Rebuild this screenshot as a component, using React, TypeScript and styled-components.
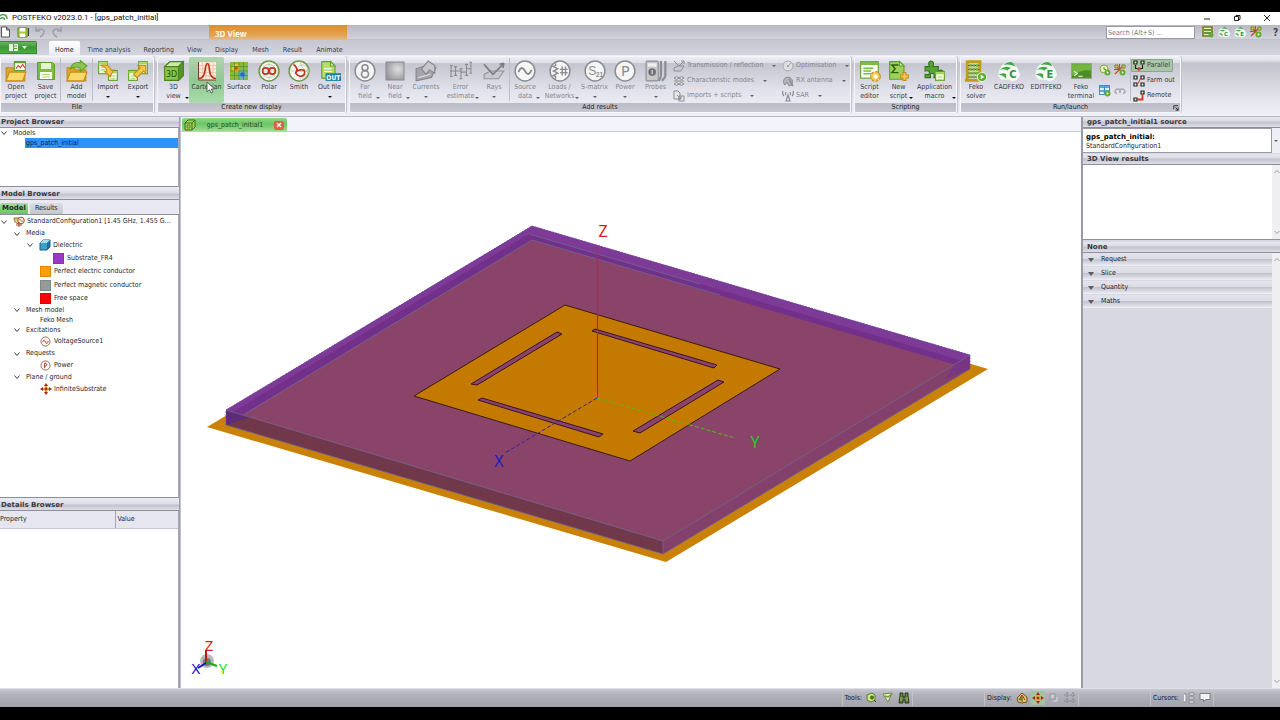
import React from "react";
import styled, { createGlobalStyle, css } from "styled-components";

const UI = `"DejaVu Sans Condensed", "DejaVu Sans", sans-serif`;
const BOLD = `"DejaVu Sans", sans-serif`;
const TITLE = `Roboto, "Noto Sans", sans-serif`;

const Global = createGlobalStyle`
  * { box-sizing: border-box; }
  body { margin: 0; background: #000; font-family: ${UI}; font-size: 7px; line-height: 9px; color: #26262c; }
  button, input { font: inherit; color: inherit; }
  button { margin: 0; padding: 0; border: 0; background: none; white-space: nowrap; }
  ul { list-style: none; margin: 0; padding: 0; }
  svg { display: block; flex: none; }
`;

const Screen = styled.div`
  min-height: 100vh;
  padding: 12px 0 13px;
  display: flex;
  flex-direction: column;
  background: #000;
  overflow: hidden;
`;

/* ---------- window chrome ---------- */
const TitleBar = styled.header`
  height: 13px;
  padding-bottom: 2px;
  display: flex;
  align-items: center;
  background: #fff;
  color: #111;
  gap: 3px;
`;
const TitleText = styled.h1`
  margin: 0;
  flex: 1;
  font-family: ${TITLE};
  font-size: 8px;
  line-height: 11px;
  font-weight: 400;
  white-space: nowrap;
`;
const WindowButtons = styled.div`
  display: flex;
  gap: 18px;
  padding-right: 7px;
`;
const IconButton = styled.button<{ $on?: boolean; $w?: number }>`
  width: ${(p) => p.$w ?? 12}px;
  display: flex;
  justify-content: center;
  align-items: center;
  ${(p) => p.$on && css`background: #a3c4a0; box-shadow: 0 0 0 1px #a3c4a0;`}
`;
const QuickBar = styled.div`
  height: 15px;
  display: flex;
  align-items: stretch;
  background: linear-gradient(#b9b9c4, #d2d2dc);
  border-bottom: 1px solid #c0c0ca;
`;
const QuickTools = styled.div`
  width: 209px;
  display: flex;
  align-items: center;
  gap: 4px;
  flex: none;
`;
const QuickMark = styled.span`
  width: 1px;
  height: 8px;
  margin-left: -4px;
  background: #333;
`;
const ContextTitle = styled.div`
  width: 138px;
  height: 17px;
  padding: 4px 0 0 6px;
  background: linear-gradient(#d98e33, #e3a251 60%, #e6b983 85%, #d8cbc4);
  font-family: "Noto Sans", sans-serif;
  font-size: 8px;
  font-weight: 700;
  color: #fff8ec;
`;
const QuickRight = styled.div`
  margin-left: auto;
  display: flex;
  align-items: center;
  gap: 4px;
`;
const Search = styled.input`
  width: 89px;
  height: 13px;
  margin: 1px 3px 0 0;
  padding: 0 1px;
  border: 1px solid #9a9aa6;
  background: #fff;
  &::placeholder { color: #77777f; opacity: 1; }
`;
const Help = styled.button`
  width: 9px;
  font-size: 10px;
  font-weight: 700;
  color: #444;
  margin-left: 5px;
  overflow: visible;
`;

/* ---------- ribbon ---------- */
const TabStrip = styled.nav`
  height: 15px;
  display: flex;
  align-items: flex-end;
  gap: 1px;
  background: linear-gradient(#c6c6d1, #d4d4de);
`;
const AppButton = styled.button`
  width: 37px;
  height: 13px;
  margin: 0 11px 1px 0;
  display: flex;
  align-items: center;
  justify-content: center;
  gap: 4px;
  border: 1px solid #3c8a30;
  border-left: 0;
  border-radius: 0 2px 0 0;
  background: linear-gradient(#6bb35f, #3a9a35 50%, #4fa944);
`;
const RibbonTab = styled.button<{ $active?: boolean }>`
  height: 14px;
  padding: 4px 6px 0;
  color: #3c3c46;
  border-radius: 2px 2px 0 0;
  ${(p) => p.$active && css`background: linear-gradient(#fff, #ececf4); margin-right: 1px; color: #222;`}
  &:nth-of-type(n + 7) { padding-left: 7px; }
`;
const RibbonBar = styled.div`
  height: 62px;
  padding: 1px 0 3px;
  display: flex;
  gap: 3px;
  background: linear-gradient(#ededf5, #e4e4ee 8%, #c3c3cd 14%, #e6e6ef 75%, #f0f0f8);
  border-bottom: 1px solid #b9b9c6;
`;
const Group = styled.section`
  flex: none;
  display: flex;
  flex-direction: column;
  border: 1px solid #f6f6fb;
  border-radius: 2px;
  box-shadow: 1px 0 0 #c3c3ce;
  background: linear-gradient(#ededf4, #dfdfe8 10%, #c5c5cf 12%, #e2e2ec 60%, #f0f0f8);
  overflow: hidden;
`;
const GroupBody = styled.div`
  height: 47px;
  display: flex;
`;
const GroupTitle = styled.div`
  height: 9px;
  display: flex;
  align-items: center;
  justify-content: center;
  background: linear-gradient(#bcbcc6, #c8c8d2);
  color: #1c1c22;
  position: relative;
`;
const Launcher = styled.button`
  position: absolute;
  right: 1px;
  top: 1px;
`;
const Divider = styled.span`
  width: 1px;
  margin: 1px 0 2px;
  background: #bdbdc9;
`;
const Tool = styled.button<{ $w: number; $hot?: boolean; $off?: boolean }>`
  width: ${(p) => p.$w}px;
  padding-top: 3px;
  display: flex;
  flex-direction: column;
  align-items: center;
  color: ${(p) => (p.$off ? "#85858e" : "#3a3a42")};
  position: relative;
  ${(p) => p.$hot && css`background: linear-gradient(#b3d3b0, #8fc891 50%, #a9dcab); border-radius: 2px;`}
`;
const ToolIcon = styled.span`
  height: 22px;
  display: flex;
  align-items: center;
`;
const ToolText = styled.span`
  margin-top: 1px;
  display: block;
  text-align: center;
  white-space: pre;
`;
const Caret = styled.span<{ $corner?: boolean; $off?: boolean }>`
  width: 0;
  height: 0;
  border: 2px solid transparent;
  border-bottom: 0;
  border-top-color: ${(p) => (p.$off ? "#5f5f68" : "#111")};
  ${(p) => (p.$corner ? css`position: absolute; right: 0; bottom: 4px;` : css`margin-top: 4px;`)}
`;
const SmallColumn = styled.div<{ $w: number }>`
  width: ${(p) => p.$w}px;
  padding-top: 2px;
  display: flex;
  flex-direction: column;
  align-items: flex-start;
  gap: 2px;
`;
const SmallTool = styled.button<{ $off?: boolean; $on?: boolean }>`
  height: 13px;
  padding: 0 2px 0 1px;
  display: flex;
  align-items: center;
  gap: 2px;
  color: ${(p) => (p.$off ? "#85858e" : "#3a3a42")};
  border: 1px solid transparent;
  ${(p) => p.$on && css`background: #a9c6a8; border-color: #8aa689; border-radius: 1px;`}
  ${Caret} { margin: 0 0 0 7px; }
`;
const IconGrid = styled.div`
  width: 33px;
  padding: 7px 1px 6px 2px;
  display: grid;
  grid-template-columns: 15px 15px;
  align-content: space-between;
`;
const Pointer = styled.svg`
  position: absolute;
  left: 17px;
  top: 24px;
  z-index: 2;
`;

/* ---------- panels ---------- */
const Body = styled.main`
  flex: 1;
  display: grid;
  grid-template-columns: 180px minmax(0, 1fr) 199px;
`;
const LeftDock = styled.aside`
  display: flex;
  flex-direction: column;
  border-right: 1px solid #9f9fac;
  background: #e9e9f3;
`;
const RightDock = styled.aside`
  display: flex;
  flex-direction: column;
  border-left: 2px solid #9a9aa8;
  background: #d8d8e2;
`;
const PanelTitle = styled.h2<{ $inset?: boolean }>`
  height: 11px;
  margin: 0;
  padding-left: ${(p) => (p.$inset ? 4 : 1)}px;
  font-size: 7px;
  line-height: 11px;
  font-family: ${BOLD};
  font-weight: 700;
  color: #3a3a42;
  background: linear-gradient(#e6e6ef, #dcdce6 40%, #c2c2cd 50%, #dedee8);
  border-bottom: 1px solid #8f8f9c;
`;
const Pane = styled.div<{ $h?: number }>`
  ${(p) => (p.$h ? css`height: ${p.$h}px; margin-bottom: 2px; border-bottom: 1px solid #8f8f9c;` : css`flex: 1;`)}
  background: #fff;
  border-right: 1px solid #a9a9b5;
  overflow: hidden;
`;
const TreeRow = styled.li<{ $depth: number; $h?: number }>`
  height: ${(p) => p.$h ?? 12}px;
  padding-left: ${(p) => p.$depth}px;
  display: flex;
  align-items: center;
  white-space: nowrap;
`;
const Twist = styled.span`
  width: 12px;
  display: flex;
`;
const TreeIcon = styled.span`
  width: 14px;
  display: flex;
`;
const Swatch = styled.span<{ $c: string }>`
  width: 11px;
  height: 11px;
  background: ${(p) => p.$c};
  box-shadow: inset 0 0 0 1px rgba(0, 0, 0, 0.12);
`;
const Selected = styled.span`
  flex: 1;
  height: 10px;
  line-height: 10px;
  padding-left: 1px;
  background: #2e92fb;
  color: #10203c;
`;
const PanelTabs = styled.div`
  height: 15px;
  padding-top: 3px;
  display: flex;
  gap: 2px;
  border-bottom: 1px solid #8f8f9c;
`;
const PanelTab = styled.button<{ $active?: boolean }>`
  padding: 0 ${(p) => (p.$active ? 2 : 5)}px;
  background: ${(p) => (p.$active ? "linear-gradient(#a5dc9c, #6cc264)" : "linear-gradient(#dcdce4, #c6c6d0)")};
  font-family: ${(p) => (p.$active ? BOLD : UI)};
  font-weight: ${(p) => (p.$active ? 700 : 400)};
  border-radius: 2px 2px 0 0;
`;
const Details = styled.table`
  width: 100%;
  border-collapse: collapse;
  th {
    height: 17px;
    padding: 1px 0 0 2px;
    font-weight: 400;
    text-align: left;
    background: #e6e6f0;
    border-bottom: 1px solid #c6c6d0;
  }
  th:first-child { width: 115px; padding-left: 0; border-right: 1px solid #a5a5b0; }
`;
const Center = styled.section`
  display: flex;
  flex-direction: column;
  background: #fff;
  border-left: 1px solid #c3c3cf;
`;
const DocTabs = styled.div`
  height: 15px;
  padding: 1px 1px 0;
  background: #f3f3fc;
  border-bottom: 1px solid #c9c9d6;
`;
const DocTab = styled.div`
  width: 105px;
  height: 13px;
  padding: 1px 3px 0 2px;
  display: flex;
  align-items: center;
  justify-content: space-between;
  background: linear-gradient(#8fd886, #6cc565 45%, #98dd8f);
  border-radius: 2px 2px 0 0;
  color: #2b4a2b;
`;
const Close = styled.button`
  width: 10px;
  height: 9px;
  display: flex;
  align-items: center;
  justify-content: center;
  background: #e2603f;
  border-radius: 2px;
`;
const Viewport = styled.div`
  flex: 1;
  display: flex;
`;
const Scene = styled.svg`
  width: 100%;
  flex: 1;
`;
const SourceRow = styled.div`
  height: 25px;
  margin-bottom: 1px;
  display: flex;
`;
const Source = styled.button`
  flex: 1;
  padding: 2px 0 0 3px;
  text-align: left;
  background: #fff;
  border: 1px solid #9c9ca8;
  border-left: 0;
  b { display: block; font-family: ${BOLD}; color: #000; }
`;
const SourceArrow = styled.span`
  width: 8px;
  display: flex;
  align-items: center;
  justify-content: center;
  background: #eeeef7;
  ${Caret} { margin: 0; }
`;
const ScrollArea = styled.div<{ $h?: number }>`
  display: flex;
  ${(p) => (p.$h ? css`height: ${p.$h}px; background: #fff; border-bottom: 1px solid #8f8f9c; margin-bottom: 2px;` : css`flex: 1;`)}
`;
const ScrollContent = styled.div`
  flex: 1;
`;
const ScrollBar = styled.div`
  width: 8px;
  padding: 4px 0;
  display: flex;
  flex-direction: column;
  justify-content: space-between;
  align-items: flex-end;
  background: #efeff1;
`;
const Fold = styled.button`
  width: 100%;
  height: 13px;
  margin-bottom: 1px;
  padding-left: 5px;
  display: flex;
  align-items: center;
  gap: 7px;
  background: linear-gradient(#e3e3ed, #dcdce6 45%, #c3c3ce 50%, #e0e0ea 85%, #f0f0f6);
`;

/* ---------- status bar ---------- */
const StatusBar = styled.footer`
  height: 19px;
  padding-right: 66px;
  display: flex;
  justify-content: flex-end;
  align-items: center;
  gap: 71px;
  background: linear-gradient(#c8c8d2, #b2b2bc 30%, #a2a2ac);
  border-top: 1px solid #dedee6;
`;
const StatusGroup = styled.div`
  height: 16px;
  padding: 0 2px;
  display: flex;
  align-items: center;
  gap: 4px;
  border: 1px solid #c1c1ca;
  border-width: 0 1px;
  color: #18181c;
`;

/* ---------- icon drawings ---------- */
const G = "#5fa02c";
const L = "#a9d65a";
const Y = "#f3c548";
const YD = "#c58d14";
const N = "#8c8c94";
const svg = (s: number, children: React.ReactNode, box = 20) => (
  <svg width={s} height={s} viewBox={`0 0 ${box} ${box}`} fill="none" aria-hidden="true">{children}</svg>
);
const folder = (
  <>
    <path d="M1 7h6l2 2h9v10H1z" fill="#d9a52c" stroke={YD} />
    <path d="M4 11h15l-3 8H1z" fill="#f8d868" stroke={YD} />
  </>
);
const sheet = (x: number, y: number, w = 10, h = 10) => (
  <>
    <rect x={x} y={y} width={w} height={h} fill="#f2f8e2" stroke={G} />
    <path d={`M${x} ${y + 1.5}h${w}`} stroke={L} strokeWidth="2" />
    <path d={`M${x + 2} ${y + 5}h${w - 4}M${x + 2} ${y + 7.5}h${w - 4}`} stroke={L} />
  </>
);
const disc = (c: string) => <circle cx="10" cy="10" r="9" fill="#f6f6f4" stroke={c} strokeWidth="1.4" />;
const play = <><circle cx="15.5" cy="15.5" r="4.2" fill="#5fae2e" stroke="#e9f6d8" /><path d="M14.3 13.4v4.2l3.2-2.1z" fill="#fff" /></>;
const shell = (letter: string, s: number) =>
  svg(s, <>
    <path d="M0 14Q1 6 6 3q4-3 8 0 5 4 6 11l-3 4H3z" fill="#f1f8f0" />
    <path d="M5 4.500Q10 0 14 3l2 3Q10 3 5 4.500z" fill="#43a64a" />
    <path d="M1.500 9Q7 4 13 8l-3 2.500Q6 7.500 1.500 9z" fill="#43a64a" />
    <path d="M.5 13.500q4-2.500 7-.5v4Q4 13.500.500 13.500z" fill="#43a64a" />
    <circle cx="13.500" cy="13" r="6" fill="#f5faf3" />
    <text x="13.500" y="16.200" fontSize="9" fontWeight="700" fontFamily="DejaVu Sans" textAnchor="middle" fill="#2f9440">{letter}</text>
  </>);

const ico = {
  open: svg(22, <>{folder}<rect x="8.500" y="1.500" width="10" height="8" fill="#fff" stroke={G} /><path d="M8.500 2h10" stroke={G} strokeWidth="2" /><path d="M10 8l2-3 2 2 2-3 2 3" stroke="#c03a28" /></>),
  save: svg(20, <><path d="M1.500 1.500h15l2 2v15h-17z" fill="#7dbb42" stroke={G} /><rect x="5" y="2" width="10" height="6" fill="#e5f3cf" /><rect x="4" y="11" width="12" height="7" fill="#fff" /><path d="M6 13.500h8M6 16h8" stroke={L} /></>),
  add: svg(22, <>{folder}<path d="M4 8Q6 1 13 2.500V.5l6 5-6 5V7.500Q9 5 4 8z" fill="#8dc450" stroke={G} /></>),
  imp: svg(22, <>{sheet(1.5, 1.500, 8, 11)}{sheet(10.5, 9.500, 8, 9)}<path d="M3 5q5 0 6 5l-2 .5 5 4.500 3-6-2 .5Q11 3 3 5z" fill={Y} stroke={YD} /></>),
  exp: svg(22, <>{sheet(10.5, 1.500, 8, 11)}{sheet(1.5, 9.500, 8, 9)}<path d="M6 13l6-6-2-2h7v7l-2-2-6 6z" fill={Y} stroke={YD} /></>),
  cube: svg(22, <><path d="M1.500 6l5-4.500h12V14L14 18.500H1.500z" fill="#8cc44c" stroke="#4a8420" /><path d="M1.500 6l5-4.500h12L14 6z" fill="#cdeaa2" stroke="#4a8420" /><path d="M14 6l4.500-4.500V14L14 18.500z" fill="#559628" stroke="#4a8420" /><text x="7.800" y="15" fontSize="8" fontFamily="DejaVu Sans Condensed" textAnchor="middle" fill="#24500c">3D</text></>),
  cart: svg(20, <><rect x="1" y="1" width="18" height="18" fill="#f7efdc" /><path d="M1 4.500h18M1 8h18M1 11.500h18M1 15h18M5.500 1v18M9 1v18M12.500 1v18M16 1v18" stroke="#e5b79a" strokeWidth=".7" /><path d="M1.500 1v18H19" stroke="#7a3d28" /><path d="M2 17.500q5 0 6-8 1-7 2.500-7t2 7q1 8 6.500 8" stroke="#c22a1c" strokeWidth="1.700" /></>),
  surface: svg(20, <><rect x="1" y="1" width="18" height="18" fill="#86bd35" /><circle cx="7" cy="7" r="4" fill="#f2bf3a" /><circle cx="7" cy="7" r="2" fill="#dc4a22" /><circle cx="13.500" cy="13.500" r="4.500" fill="#58b8c9" /><circle cx="13.500" cy="13.500" r="2.300" fill="#2f62b8" /><path d="M5.500 1v18M10 1v18M14.500 1v18M1 5.500h18M1 10h18M1 14.500h18" stroke="#4f8020" strokeWidth=".6" /></>),
  polar: svg(22, <>{disc("#6d9646")}<circle cx="10" cy="10" r="6" stroke="#b9c8a0" strokeWidth=".8" /><path d="M10 1v18M1 10h18M4 4l12 12M16 4L4 16" stroke="#b9c8a0" strokeWidth=".6" /><circle cx="7" cy="10" r="2.800" stroke="#c0321e" strokeWidth="1.500" /><circle cx="13" cy="10" r="2.800" stroke="#c0321e" strokeWidth="1.500" /></>),
  smith: svg(22, <>{disc("#6d9646")}<circle cx="13" cy="10" r="5.500" stroke="#b9c8a0" strokeWidth=".8" /><path d="M1 10h18M19 10Q12 9 11 1M19 10q-7 1-8 9" stroke="#b9c8a0" strokeWidth=".7" /><path d="M5 4q5 4 2 8 4 5 8 1 1-5-4-4-4 1-4 3" stroke="#c0321e" strokeWidth="1.500" /></>),
  out: svg(22, <><path d="M2.500 1.500h8l4 4v11h-12z" fill="#b6db70" stroke={G} /><path d="M10.500 1.500v4h4z" fill="#eef8d8" stroke={G} /><path d="M4.500 8h7M4.500 10.500h7" stroke="#fff" /><rect x="6" y="12" width="14" height="7" fill="#1d7fa0" /><text x="13" y="17.800" fontSize="6" fontWeight="700" fontFamily="DejaVu Sans Condensed" textAnchor="middle" fill="#fff">OUT</text></>),
  far: svg(22, <>{disc(N)}<circle cx="10" cy="7" r="2.700" stroke={N} strokeWidth="1.500" /><circle cx="10" cy="12.800" r="3.200" stroke={N} strokeWidth="1.500" /></>),
  near: svg(20, <><defs><radialGradient id="nf" cx=".65" cy=".4" r=".8"><stop offset="0" stopColor="#dededf" /><stop offset="1" stopColor="#8e8e94" /></radialGradient></defs><rect x="1" y="1" width="18" height="18" fill="url(#nf)" stroke="#8a8a90" /></>),
  cur: svg(22, <><path d="M1 8l10-3 8 2-4 9-14 3z" fill="#a4a4aa" stroke="#85858c" /><path d="M6 8l6-7 6 4v7l-5-3-3 4z" fill="#c6c6cb" stroke="#85858c" /><path d="M3 16l11-3" stroke="#ddd" /></>),
  err: svg(22, <path d="M1 5v10M0 10h5M5 6v8M5 10h5M10 8v9M10 11h5M15 4v10M15 8h4M19 2v10M8.500 8h3M8.500 17h3M-.5 5h3M-.5 15h3M3.500 6h3M3.500 14h3M13.500 4h3M13.500 14h3M17.500 2h3M17.500 12h3" stroke={N} />),
  rays: svg(22, <><path d="M1 13l6-3h12l-5 7H1z" fill="#c8c8cd" stroke="#94949b" /><path d="M1 4l8 9L19 3M19 3l-1 4M19 3l-4 1" stroke="#7d7d85" strokeWidth="1.500" /></>),
  src: svg(22, <>{disc(N)}<path d="M4 11q3-7 6-1t6-1" stroke={N} strokeWidth="1.700" /></>),
  loads: svg(22, <>{disc(N)}<path d="M6 3v2l-2 1 4 2-4 2 4 2-4 2 2 1v2" stroke={N} strokeWidth="1.300" /><path d="M12 6v8M15 6v8M10 8.500h7M10 11.500h7" stroke={N} strokeWidth="1.300" /></>),
  smat: svg(22, <>{disc(N)}<text x="7.500" y="14" fontSize="11" fontFamily="Liberation Sans" textAnchor="middle" fill={N}>S</text><text x="14" y="15.500" fontSize="6" fontWeight="700" fontFamily="Liberation Sans" textAnchor="middle" fill={N}>21</text></>),
  pow: svg(22, <>{disc(N)}<text x="10.300" y="14.500" fontSize="13" fontFamily="DejaVu Sans" textAnchor="middle" fill={N}>P</text></>),
  probe: svg(22, <><rect x="1" y="1" width="11" height="18" rx="1" fill="#c9c9cd" stroke={N} /><rect x="2.500" y="3" width="8" height="3" fill="#efefef" /><circle cx="6.500" cy="11" r="3.500" fill="#707078" /><path d="M6.500 9v4" stroke="#eee" /><path d="M14.500 1v14M18.500 1v14M14.500 15l-2 4M18.500 15l-3 4" stroke={N} strokeWidth="2" /></>),
  script: svg(22, <><rect x="1.500" y="1.500" width="16" height="15" fill="#fbfdf4" stroke={G} /><path d="M1.500 3h16" stroke="#7dbb42" strokeWidth="3" /><path d="M4 7.500h9M4 10h7M4 12.500h8" stroke="#7dbb42" strokeWidth="1.200" /><circle cx="15" cy="15" r="3.200" stroke={YD} strokeWidth="3.400" strokeDasharray="2 .9" /><circle cx="15" cy="15" r="3" fill="#fff" stroke={Y} strokeWidth="2" /></>),
  news: svg(22, <><path d="M1.500 1.500h9l4 4v12h-13z" fill="#9fd05a" stroke={G} /><path d="M10.500 1.500v4h4z" fill="#e8f5cf" stroke={G} /><path d="M9.500 4.500h-6l3 3.500-3 3.500h6" stroke="#2d5d10" strokeWidth="1.300" /><path d="M15 11v8M11 15h8" stroke={YD} strokeWidth="3.600" /><path d="M15 12v6M12 15h6" stroke={Y} strokeWidth="2" /></>),
  macro: svg(22, <><path d="M1 6h4q-2-4 1-5 4 0 2 5h5v4q4-2 4.500 1t-4.500 2v3H9q1-4-1.500-4T6 16H1v-3q4 1 4-1.500T1 10z" fill="#58a336" stroke="#2f7420" />{sheet(10.5, 10.500, 8, 8)}</>),
  solver: svg(22, <><path d="M2 1v18M13.500 1v18M0 18.500h16M1 1.500h14" stroke="#c29a1c" strokeWidth="2.600" /><path d="M3 5h10M3 8.500h10M3 12h10M3 15.500h10" stroke="#3c3416" strokeWidth=".8" /><path d="M4 5h8M4 8.500h8M4 12h8M4 15.500h8" stroke="#7ab52e" strokeWidth="2.400" strokeDasharray="2 1" />{play}</>),
  term: svg(21, <><rect x="0.500" y="2.500" width="19" height="14" fill="#4a8f22" stroke="#98a08e" /><path d="M1 3h18v6Q10 8 1 14z" fill="#75b643" /><path d="M3 10l3 2-3 2M7 14.500h4" stroke="#fff" /></>),
};

const small = {
  tr: svg(12, <path d="M1 1l5 5 5-5M8 1h3v3M1 8l4-2h6l-3 5H1z" stroke={N} />, 12),
  cm: svg(12, <path d="M1 3q2.500-3 5 0t5 0M1 3q2.500 3 5 0t5 0M1 9q2.500-3 5 0t5 0M1 9q2.500 3 5 0t5 0M1 6h10" stroke={N} />, 12),
  im: svg(12, <><path d="M1 1h4l2 2v6H1zM6 6h5v5H6z" fill="#e8e8ec" stroke={N} /><path d="M4 5l4 4M8 6v3H5" stroke={N} /></>, 12),
  op: svg(12, <><circle cx="6" cy="6" r="5" fill="#dfdfe3" stroke="#a6a6ad" /><circle cx="6" cy="6" r="1" fill={N} /><path d="M6 6l3-3" stroke="#a6a6ad" /></>, 12),
  rx: svg(12, <><path d="M2 9q-2-6 4-7 6 1 4 8l-3 1-2-4-2 3z" fill="#b4b4ba" stroke={N} /><path d="M7 4l4 7" stroke={N} strokeWidth="1.500" /></>, 12),
  sar: svg(12, <path d="M6 5l-2 6h4zM1 1q-1 3 1 5M11 1q1 3-1 5M4 2q-1 2 0 3M8 2q1 2 0 3" stroke={N} strokeWidth="1.200" />, 12),
  par: svg(12, <><path d="M1 1h3v3H1zM8 1h3v3H8z" fill="#d9ef9a" stroke="#222" strokeWidth="1.200" /><path d="M2.500 5v3.500H9.500V5" stroke="#222" strokeWidth="1.200" /><circle cx="6" cy="9" r="1.700" fill="#d43a22" /></>, 12),
  farm: svg(12, <><path d="M1 1h3v3H1zM8 1h3v3H8zM1 8h3v3H1zM8 8h3v3H8z" fill="#f2f2e6" stroke="#222" strokeWidth="1.200" /><path d="M4 10L8 3" stroke="#d43a22" /></>, 12),
  rem: svg(12, <><path d="M8 1h3v3H8zM1 8h3v3H1z" fill="#d9ef9a" stroke="#222" strokeWidth="1.200" /><path d="M4 9.500h5.500V4" stroke="#d43a22" strokeWidth="1.800" /></>, 12),
  time: svg(12, <><circle cx="5" cy="5" r="4" fill="#e6f2c0" stroke="#8aa63a" /><path d="M5 3v2.500h2" stroke="#6d8730" /><circle cx="8.500" cy="8.500" r="3" fill="#62ac30" /><path d="M7.800 7v3l2-1.500z" fill="#fff" /></>, 12),
  opt: svg(12, <><path d="M1 1l9 9M10 1L1 10M5.500 0v6M0 5.500h6" stroke="#c8452c" strokeWidth="1.200" /><path d="M1 1h3v3H1zM8 1h3v3H8z" fill="#b9cf4a" stroke="#7a8a20" /><circle cx="8.500" cy="8.500" r="3" fill="#62ac30" /><path d="M7.800 7v3l2-1.500z" fill="#fff" /></>, 12),
  win: svg(12, <><rect x=".5" y=".5" width="10" height="9" fill="#dff1fb" stroke="#3e8fc4" /><path d="M1 2h9M5.500 1v8M1 6h9" stroke="#3e8fc4" strokeWidth="1.300" /><circle cx="8.500" cy="8.500" r="3" fill="#62ac30" /><path d="M7.800 7v3l2-1.500z" fill="#fff" /></>, 12),
  link: svg(12, <path d="M1 8q0-4 3-4t2 4M11 8q0-4-3-4t-2 4M1 8h2M9 8h2" stroke="#a9a9b1" strokeWidth="1.500" />, 12),
  newdoc: svg(12, <path d="M1.500 1h5l3 3v7h-8zM6.500 1v3h3" fill="#fff" stroke="#555" />, 12),
  save: svg(11, <><path d="M1 1h10v10H1z" fill="#a8c83c" stroke="#5c8a1c" /><path d="M3 1h6v4H3zM3 7h6v4H3z" fill="#fff" /></>, 12),
  undo: svg(12, <path d="M2 1v4h4M2 5q5-4 8 0 0 4-4 6" stroke="#a0a0aa" strokeWidth="1.600" />, 12),
  redo: svg(12, <path d="M10 1v4H6M10 5Q5 1 2 5q0 4 4 6" stroke="#a0a0aa" strokeWidth="1.600" />, 12),
  abacus: svg(12, <><path d="M1 1h9v9H1z" fill="#e5f0b8" stroke="#7a7a1a" strokeWidth="1.600" /><path d="M2 4h7M2 7h7" stroke="#3f7018" strokeWidth="1.600" /><circle cx="9" cy="9" r="2.500" fill="#62ac30" /></>, 12),
  cube: svg(12, <><path d="M1 4l3-3h7v7l-3 3H1z" fill="#a4d45c" stroke="#3c6e18" /><path d="M8 4v7M1 4h7l3-3" stroke="#3c6e18" /><path d="M3 6h3v3H3z" stroke="#3c6e18" strokeWidth=".7" /></>, 12),
  zoom: svg(12, <><path d="M1 3l5-2 3 2v5L5 10 1 8z" fill="#cfe38a" stroke="#5c7a1c" /><circle cx="6" cy="5.500" r="2" fill="#3f7a18" /><path d="M8 8l2 2" stroke="#333" /></>, 12),
  pick: svg(12, <><path d="M1 2l9-1-4 9z" fill="#e8edcc" stroke="#7a8446" /><path d="M3 4l3 1 4-3" stroke="#6ba32e" strokeWidth="1.500" /></>, 12),
  find: svg(12, <><path d="M2 1h3v4h2V1h3v3l1 7H7V8H5v3H1l1-7z" fill="#5f7d3c" stroke="#2c3a1c" /><path d="M3 5v4M9 5v4" stroke="#a9bf80" /></>, 12),
  view: svg(12, <><path d="M1 6l5-5 5 4v5l-5 1-4-1z" fill="#e0c070" stroke="#6e5a1e" /><path d="M3 8l3-5 3 5M6 4v6" stroke="#a03a24" /><circle cx="5" cy="7" r="1.500" fill="#4f8f2a" /></>, 12),
  axes: svg(12, <><path d="M6 0L4 3h4zM6 12L4 9h4zM0 6l3-2v4zM12 6L9 4v4z" fill="#a8281c" /><path d="M6 3v6M3 6h6" stroke="#d8a030" strokeWidth="2.400" /><circle cx="6" cy="6" r="1.300" fill="#a8281c" /></>, 12),
  dim: svg(12, <><rect x="2" y="2" width="5" height="5" fill="#ccccd3" stroke="#93939c" /><path d="M5 9h4V5" stroke="#dadae0" /></>, 12),
  crop: svg(12, <path d="M3 0v12M9 0v12M0 3h12M0 9h12" stroke="#85858e" strokeDasharray="2 1" />, 12),
  legend: svg(12, <><path d="M1 2h2v8H1M6 1h5v2H6zM6 5h5v2H6zM6 9h5v2H6z" fill="#f4f4f6" stroke="#7e7e88" strokeWidth=".8" /></>, 12),
  note: svg(12, <path d="M1 1.500h10v6H6.500L4.500 10V7.500H1z" fill="#f4f4f6" stroke="#7d7d86" />, 12),
};

const chevron = (s = 6) => (
  <svg width={s} height={s} viewBox="0 0 6 6" fill="none" aria-hidden="true"><path d="M.5 1.500L3 4.500l2.500-3" stroke="#444" /></svg>
);
const scrollMark = (up: boolean) => (
  <svg width="6" height="6" viewBox="0 0 6 6" fill="none" aria-hidden="true"><path d={up ? "M.5 4L3 1.500 5.500 4" : "M.5 2L3 4.500 5.500 2"} stroke="#9a9aa2" /></svg>
);

type Item = { t: string; i: React.ReactNode; w: number; a?: "below" | "corner"; hot?: boolean };
const items = (list: (Item | null)[], off = false) =>
  list.map((it, k) =>
    it ? (
      <Tool key={k} $w={it.w} $hot={it.hot} $off={off}>
        <ToolIcon>{it.i}</ToolIcon>
        <ToolText>{it.t}</ToolText>
        {it.a && <Caret $corner={it.a === "corner"} $off={off} />}
        {it.hot && (
          <Pointer width="9" height="13" viewBox="0 0 9 13" aria-hidden="true">
            <path d="M1 1v10l2.500-2.300L5 12l1.800-.8-1.500-3.200H8.500z" fill="#fff" stroke="#444" strokeWidth=".8" />
          </Pointer>
        )}
      </Tool>
    ) : (
      <Divider key={k} />
    )
  );

const fileItems: (Item | null)[] = [
  { t: "Open\nproject", i: ico.open, w: 30 },
  { t: "Save\nproject", i: ico.save, w: 29 },
  null,
  { t: "Add\nmodel", i: ico.add, w: 31 },
  null,
  { t: "Import", i: ico.imp, w: 30, a: "below" },
  { t: "Export", i: ico.exp, w: 30, a: "below" },
];
const displayItems: Item[] = [
  { t: "3D\nview", i: ico.cube, w: 31, a: "corner" },
  { t: "Cartesian", i: ico.cart, w: 35, hot: true },
  { t: "Surface", i: ico.surface, w: 30 },
  { t: "Polar", i: ico.polar, w: 30 },
  { t: "Smith", i: ico.smith, w: 30 },
  { t: "Out file", i: ico.out, w: 31, a: "below" },
];
const resultItems: (Item | null)[] = [
  { t: "Far\nfield", i: ico.far, w: 30, a: "corner" },
  { t: "Near\nfield", i: ico.near, w: 30, a: "corner" },
  { t: "Currents", i: ico.cur, w: 32, a: "below" },
  { t: "Error\nestimate", i: ico.err, w: 37, a: "corner" },
  { t: "Rays", i: ico.rays, w: 30, a: "below" },
  null,
  { t: "Source\ndata", i: ico.src, w: 30, a: "corner" },
  { t: "Loads /\nNetworks", i: ico.loads, w: 39, a: "corner" },
  { t: "S-matrix", i: ico.smat, w: 31, a: "below" },
  { t: "Power", i: ico.pow, w: 30, a: "below" },
  { t: "Probes", i: ico.probe, w: 31, a: "below" },
];
const scriptItems: Item[] = [
  { t: "Script\neditor", i: ico.script, w: 29 },
  { t: "New\nscript", i: ico.news, w: 29, a: "corner" },
  { t: "Application\nmacro", i: ico.macro, w: 43, a: "corner" },
];
const launchItems: (Item | null)[] = [
  { t: "Feko\nsolver", i: ico.solver, w: 30 },
  { t: "CADFEKO", i: shell("C", 22), w: 36 },
  { t: "EDITFEKO", i: shell("E", 22), w: 38 },
  { t: "Feko\nterminal", i: ico.term, w: 32 },
];

const badge = (inner: React.ReactNode) => svg(11, <><circle cx="6" cy="6" r="5" fill="#fbf6f2" stroke="#7a5a50" strokeWidth=".9" />{inner}</>, 12);
type Node = { t: string; d: number; h?: number; tw?: boolean; i?: React.ReactNode };
const tree: Node[] = [
  { t: "StandardConfiguration1 [1.45 GHz, 1.455 G...", d: 1, h: 13, tw: true, i: svg(12, <><path d="M1 2h5v6q-5-1-5-6z" fill="#e9d58a" stroke="#8a6a2a" /><circle cx="8" cy="4.500" r="3.300" fill="#f6efe6" stroke="#b0402c" /><path d="M3 9h6M6 6v5" stroke="#b0402c" /><path d="M6 4.500q1-2 2 0t2 0" stroke="#4f8030" /></>, 12) },
  { t: "Media", d: 14, h: 11, tw: true },
  { t: "Dielectric", d: 27, h: 12, tw: true, i: svg(12, <><path d="M1 4l3-3h7v7l-3 3H1z" fill="#3f9fc8" stroke="#1f5f80" /><path d="M1 4l3-3h7L8 4z" fill="#a9dcf0" /><path d="M8 4l3-3v7l-3 3z" fill="#1f6f98" /></>, 12) },
  { t: "Substrate_FR4", d: 53, h: 14, i: <Swatch $c="#9a38c8" /> },
  { t: "Perfect electric conductor", d: 40, h: 13, i: <Swatch $c="#ff9c0a" /> },
  { t: "Perfect magnetic conductor", d: 40, h: 14, i: <Swatch $c="#959b99" /> },
  { t: "Free space", d: 40, h: 13, i: <Swatch $c="#fb0407" /> },
  { t: "Mesh model", d: 14, h: 10, tw: true },
  { t: "Feko Mesh", d: 40, h: 10 },
  { t: "Excitations", d: 14, h: 10, tw: true },
  { t: "VoltageSource1", d: 40, h: 13, i: badge(<path d="M3 6.500q1.500-4 3 0t3-1" stroke="#c0392b" />) },
  { t: "Requests", d: 14, h: 11, tw: true },
  { t: "Power", d: 40, h: 12, i: badge(<path d="M5 9V3.500h1.500q2 1.500 0 3H5" stroke="#a03a2b" />) },
  { t: "Plane / ground", d: 14, h: 12, tw: true },
  { t: "InfiniteSubstrate", d: 40, h: 12, i: small.axes },
];

function Model() {
  return (
    <Scene viewBox="181 132 900 556" preserveAspectRatio="xMidYMid meet" role="img" aria-label="3D view of the patch antenna">
      <path d="M207 427L529 234 988 369 666 562z" fill="#c98108" />
      <path d="M226 410L532 226 970 355V369L663 554 226 425z" fill="#8a446a" />
      <path d="M226 410L532 226 970 355V369L532 240 245 414z" fill="#7d3a97" />
      <path d="M226 416L529 234 970 363V369L532 240 240 416z" fill="#72308a" />
      <path d="M226 410L663 541V554L226 425z" fill="#71374a" />
      <path d="M226 410L250 417 226 425z" fill="#5c2c78" />
      <path d="M663 541L970 355V369L663 554z" fill="#83406a" />
      <path d="M955 364L970 355V369L946 378z" fill="#73318c" opacity=".7" />
      <path d="M226 410L663 541 970 355M663 541V554M226 425L663 554 970 369M529 234L700 284M245 414L532 240 720 295" fill="none" stroke="#70698e" strokeWidth=".8" />
      <path d="M226 425V410L532 226 970 355V369" fill="none" stroke="#6b49a8" strokeWidth=".9" strokeDasharray="2 1" />
      <path d="M565 305L780 369 630 461 414 396z" fill="#c47a00" stroke="#3a1c08" />
      <g fill="#8a446a" stroke="#3a1226">
        <path d="M471 384L557 332 562 334 477 385z" />
        <path d="M592 331L595 329 717 365 714 368z" />
        <path d="M633 431L718 380 724 382 640 433z" />
        <path d="M478 400L482 398 603 434 599 437z" />
      </g>
      <path d="M597.500 247V398" fill="none" stroke="#ee1122" strokeWidth="1.200" />
      <path d="M597 398L505 453" fill="none" stroke="#3a1aa8" strokeDasharray="4 2" />
      <path d="M597 398L735 438" fill="none" stroke="#5cb81c" strokeDasharray="4 2" />
      <g fontFamily="Noto Sans, sans-serif" fontSize="16" textAnchor="middle">
        <text x="603" y="237" fill="#d81820">Z</text>
        <text x="499" y="467" fill="#1c1cc0">X</text>
        <text x="755" y="448" fill="#28c828">Y</text>
      </g>
      <circle cx="207" cy="661" r="7" fill="#b9b9bc" />
      <circle cx="207" cy="662" r="4" fill="#77777c" />
      <path d="M206 663V650" stroke="#c81818" strokeWidth="2" />
      <path d="M206 663L198 668" stroke="#1414b8" strokeWidth="2" />
      <path d="M206 662L217 666" stroke="#18a818" strokeWidth="2" />
      <g fontFamily="Noto Sans, sans-serif" fontSize="15" textAnchor="middle">
        <text x="209" y="651" fill="#e01818">Z</text>
        <text x="196" y="674" fill="#1414d0">X</text>
        <text x="223" y="674" fill="#20e020">Y</text>
      </g>
    </Scene>
  );
}

export default function App() {
  return (
    <Screen>
      <Global />
      <TitleBar>
        <svg width="9" height="9" viewBox="0 0 9 9" fill="none" aria-hidden="true"><path d="M0 3q3-3 6 0M0 6q3-3 5 1M4 2q3 0 3 4" stroke="#44a64c" strokeWidth="1.500" /></svg>
        <TitleText>POSTFEKO v2023.0.1 - [gps_patch_initial]</TitleText>
        <WindowButtons>
          <IconButton aria-label="Minimise">{svg(8, <path d="M1 5h6" stroke="#222" />, 8)}</IconButton>
          <IconButton aria-label="Restore">{svg(8, <path d="M1.500 2.500h4v4h-4zM3 2.500v-1h4v4H6" stroke="#222" />, 8)}</IconButton>
          <IconButton aria-label="Close">{svg(8, <path d="M1 1l6 6M7 1L1 7" stroke="#222" />, 8)}</IconButton>
        </WindowButtons>
      </TitleBar>
      <QuickBar>
        <QuickTools>
          <IconButton aria-label="New">{small.newdoc}</IconButton>
          <IconButton aria-label="Save">{small.save}</IconButton>
          <QuickMark />
          <IconButton $w={14} aria-label="Undo">{small.undo}</IconButton>
          <IconButton aria-label="Redo">{small.redo}</IconButton>
        </QuickTools>
        <ContextTitle>3D View</ContextTitle>
        <QuickRight>
          <Search aria-label="Search" placeholder="Search (Alt+S) ..." />
          <IconButton aria-label="Solver">{small.abacus}</IconButton>
          <IconButton aria-label="CADFEKO">{shell("C", 12)}</IconButton>
          <IconButton aria-label="EDITFEKO">{shell("E", 12)}</IconButton>
          <IconButton aria-label="Optimiser">{small.opt}</IconButton>
          <Help>?</Help>
        </QuickRight>
      </QuickBar>
      <TabStrip>
        <AppButton aria-label="Application menu">
          {svg(9, <><rect x="0" y="1" width="9" height="7" fill="#e4f5e0" /><path d="M4.500 1v7M5 3h3M5 5.500h3" stroke="#4fa944" /></>, 9)}
          {svg(5, <path d="M0 1h5L2.500 4z" fill="#e4f5e0" />, 5)}
        </AppButton>
        {["Home", "Time analysis", "Reporting", "View", "Display", "Mesh", "Result", "Animate"].map((t) => (
          <RibbonTab key={t} $active={t === "Home"}>{t}</RibbonTab>
        ))}
      </TabStrip>
      <RibbonBar>
        <Group>
          <GroupBody>{items(fileItems)}</GroupBody>
          <GroupTitle>File</GroupTitle>
        </Group>
        <Group>
          <GroupBody>{items(displayItems)}</GroupBody>
          <GroupTitle>Create new display</GroupTitle>
        </Group>
        <Group>
          <GroupBody>
            {items(resultItems, true)}
            <SmallColumn $w={109}>
              <SmallTool $off>{small.tr}Transmission / reflection<Caret $off /></SmallTool>
              <SmallTool $off>{small.cm}Characteristic modes<Caret $off /></SmallTool>
              <SmallTool $off>{small.im}Imports + scripts<Caret $off /></SmallTool>
            </SmallColumn>
            <SmallColumn $w={70}>
              <SmallTool $off>{small.op}Optimisation<Caret $off /></SmallTool>
              <SmallTool $off>{small.rx}RX antenna<Caret $off /></SmallTool>
              <SmallTool $off>{small.sar}SAR<Caret $off /></SmallTool>
            </SmallColumn>
          </GroupBody>
          <GroupTitle>Add results</GroupTitle>
        </Group>
        <Group>
          <GroupBody>{items(scriptItems)}</GroupBody>
          <GroupTitle>Scripting</GroupTitle>
        </Group>
        <Group>
          <GroupBody>
            {items(launchItems)}
            <IconGrid>
              <IconButton aria-label="Timing">{small.time}</IconButton>
              <IconButton aria-label="Optimise">{small.opt}</IconButton>
              <IconButton aria-label="Window">{small.win}</IconButton>
              <IconButton aria-label="Link">{small.link}</IconButton>
            </IconGrid>
            <Divider />
            <SmallColumn $w={49}>
              <SmallTool $on>{small.par}Parallel</SmallTool>
              <SmallTool>{small.farm}Farm out</SmallTool>
              <SmallTool>{small.rem}Remote</SmallTool>
            </SmallColumn>
          </GroupBody>
          <GroupTitle>
            Run/launch
            <Launcher aria-label="Launch options">{svg(7, <path d="M2 6V2h5M4 4l3 3M7 4v3H4" stroke="#222" />, 8)}</Launcher>
          </GroupTitle>
        </Group>
      </RibbonBar>
      <Body>
        <LeftDock>
          <PanelTitle>Project Browser</PanelTitle>
          <Pane $h={59}>
            <ul>
              <TreeRow $depth={1} $h={10}><Twist>{chevron()}</Twist>Models</TreeRow>
              <TreeRow $depth={25} $h={10}><Selected>gps_patch_initial</Selected></TreeRow>
            </ul>
          </Pane>
          <PanelTitle>Model Browser</PanelTitle>
          <PanelTabs>
            <PanelTab $active>Model</PanelTab>
            <PanelTab>Results</PanelTab>
          </PanelTabs>
          <Pane $h={283}>
            <ul>
              {tree.map((n) => (
                <TreeRow key={n.t} $depth={n.d} $h={n.h}>
                  {n.tw && <Twist>{chevron()}</Twist>}
                  {n.i && <TreeIcon>{n.i}</TreeIcon>}
                  {n.t}
                </TreeRow>
              ))}
            </ul>
          </Pane>
          <PanelTitle>Details Browser</PanelTitle>
          <Pane>
            <Details>
              <thead><tr><th scope="col">Property</th><th scope="col">Value</th></tr></thead>
            </Details>
          </Pane>
        </LeftDock>
        <Center>
          <DocTabs>
            <DocTab>{small.cube}gps_patch_initial1<Close aria-label="Close tab">{svg(6, <path d="M1 1l4 4M5 1L1 5" stroke="#fff" strokeWidth="1.300" />, 6)}</Close></DocTab>
          </DocTabs>
          <Viewport><Model /></Viewport>
        </Center>
        <RightDock>
          <PanelTitle $inset>gps_patch_initial1 source</PanelTitle>
          <SourceRow>
            <Source aria-haspopup="listbox"><b>gps_patch_initial:</b>StandardConfiguration1</Source>
            <SourceArrow><Caret $off /></SourceArrow>
          </SourceRow>
          <PanelTitle $inset>3D View results</PanelTitle>
          <ScrollArea $h={75}>
            <ScrollContent />
            <ScrollBar>{scrollMark(true)}{scrollMark(false)}</ScrollBar>
          </ScrollArea>
          <PanelTitle $inset>None</PanelTitle>
          <ScrollArea>
            <ScrollContent>
              {["Request", "Slice", "Quantity", "Maths"].map((t) => (
                <Fold key={t}>{svg(6, <path d="M0 1h6L3 5z" fill="#5c5c66" />, 6)}{t}</Fold>
              ))}
            </ScrollContent>
            <ScrollBar>{scrollMark(true)}{scrollMark(false)}</ScrollBar>
          </ScrollArea>
        </RightDock>
      </Body>
      <StatusBar>
        <StatusGroup>
          Tools:
          <IconButton aria-label="Zoom">{small.zoom}</IconButton>
          <IconButton aria-label="Select">{small.pick}</IconButton>
          <IconButton aria-label="Find">{small.find}</IconButton>
        </StatusGroup>
        <StatusGroup>
          Display:
          <IconButton aria-label="View">{small.view}</IconButton>
          <IconButton $on aria-label="Axes">{small.axes}</IconButton>
          <IconButton aria-label="Layers">{small.dim}</IconButton>
          <IconButton aria-label="Bounds">{small.crop}</IconButton>
        </StatusGroup>
        <StatusGroup>
          Cursors:
          <IconButton aria-label="Legend">{small.legend}</IconButton>
          <IconButton aria-label="Annotation">{small.note}</IconButton>
        </StatusGroup>
      </StatusBar>
    </Screen>
  );
}
